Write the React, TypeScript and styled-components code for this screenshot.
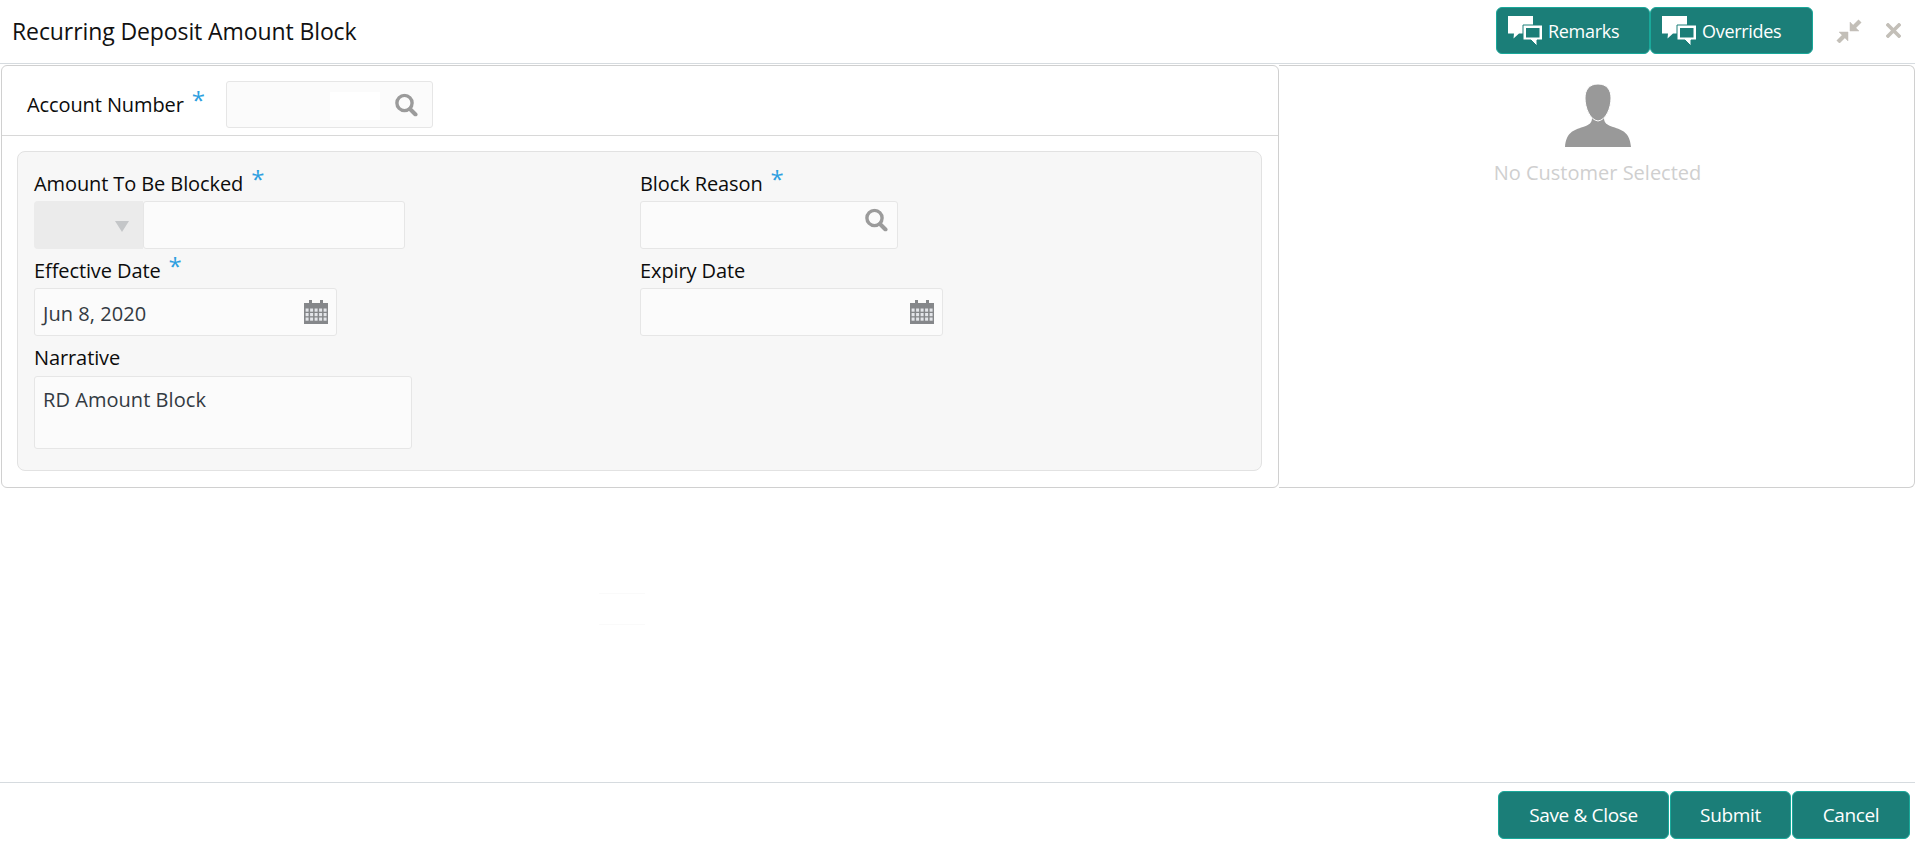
import React from "react";
import styled, { createGlobalStyle } from "styled-components";

const GlobalStyle = createGlobalStyle`
  html, body {
    margin: 0;
    padding: 0;
    background: #fff;
  }
  body {
    font-family: "Open Sans", "Noto Sans", "Liberation Sans", sans-serif;
    color: #0c0c0c;
  }
  * {
    box-sizing: border-box;
  }
`;

const Page = styled.div`
  width: 1915px;
  height: 843px;
  display: flex;
  flex-direction: column;
  overflow: hidden;
  position: relative;
`;

const Header = styled.header`
  height: 64px;
  flex: none;
  display: flex;
  align-items: flex-start;
  padding: 7px 14px 0 12px;
  border-bottom: 1px solid #d6dbdf;
`;

const Title = styled.h1`
  margin: 0;
  height: 47px;
  line-height: 49px;
  font-size: 23px;
  font-weight: 400;
  letter-spacing: -0.1px;
  color: #111;
`;

const HeaderActions = styled.div`
  margin-left: auto;
  display: flex;
  align-items: center;
`;

const ActionButton = styled.button<{ $width: number }>`
  width: ${(p) => p.$width}px;
  height: 47px;
  flex: none;
  display: flex;
  align-items: center;
  gap: 5px;
  padding: 0 0 0 11px;
  background: #1b7e78;
  border: 1px solid #19a89a;
  border-radius: 6px;
  color: #fff;
  font-family: inherit;
  font-size: 18px;
  letter-spacing: -0.3px;
`;

const WindowIcons = styled.div`
  display: flex;
  align-items: center;
  gap: 24px;
  margin-left: 23px;
`;

const Body = styled.main`
  flex: none;
  display: flex;
  padding: 1px 0 0 1px;
`;

const MainPanel = styled.section`
  width: 1278px;
  height: 423px;
  flex: none;
  display: flex;
  flex-direction: column;
  border: 1px solid #d0d0d0;
  border-radius: 6px;
`;

const AccountRow = styled.div`
  height: 70px;
  flex: none;
  display: flex;
  align-items: flex-start;
  padding: 15px 0 0 25px;
  border-bottom: 1px solid #d8d8d8;
`;

const AccountLabel = styled.label`
  display: block;
  width: 199px;
  line-height: 47px;
  font-size: 20px;
  letter-spacing: -0.1px;
  white-space: nowrap;
`;

const Star = styled.span`
  margin-left: 8px;
  color: #2e9fe0;
  font-size: 24px;
  line-height: 0;
  vertical-align: 3px;
`;

const FormSection = styled.div`
  margin: 15px 16px 16px 15px;
  flex: 1;
  display: grid;
  grid-template-columns: 606px 1fr;
  grid-auto-rows: min-content;
  row-gap: 10px;
  align-content: start;
  padding: 20px 0 0 16px;
  background: #f7f7f7;
  border: 1px solid #e2e2e2;
  border-radius: 8px;
`;

const Field = styled.div`
  display: flex;
  flex-direction: column;
  align-items: flex-start;
`;

const FieldLabel = styled.label<{ $gap?: number }>`
  display: block;
  height: 22px;
  margin-bottom: ${(p) => p.$gap ?? 7}px;
  line-height: 24px;
  font-size: 20px;
  letter-spacing: -0.1px;
  white-space: nowrap;
`;

const InputBox = styled.div<{ $width: number; $height?: number }>`
  position: relative;
  width: ${(p) => p.$width}px;
  height: ${(p) => p.$height ?? 48}px;
  flex: none;
  display: flex;
  align-items: center;
  padding: 2px 8px 0;
  background: #fbfbfb;
  border: 1px solid #e6e6e6;
  border-radius: 3px;
  font-size: 20px;
  letter-spacing: 0.05px;
  color: #333a42;
`;

const TextArea = styled(InputBox)`
  align-items: flex-start;
  padding-top: 11px;
  line-height: 24px;
`;

const AmountGroup = styled.div`
  display: flex;
`;

const CurrencySelect = styled.div`
  width: 109px;
  height: 48px;
  flex: none;
  display: flex;
  align-items: center;
  justify-content: flex-end;
  padding-right: 14px;
  background: #ebebeb;
  border-radius: 4px 0 0 4px;
`;

const Caret = styled.span`
  width: 0;
  height: 0;
  border-left: 7.5px solid transparent;
  border-right: 7.5px solid transparent;
  border-top: 11px solid #c4c6c8;
  margin-top: 2px;
`;

const WhitePatch = styled.span`
  position: absolute;
  left: 103px;
  top: 10px;
  width: 50px;
  height: 28px;
  background: #fff;
`;

const IconSlot = styled.span<{ $right: number; $up?: number }>`
  position: absolute;
  right: ${(p) => p.$right}px;
  top: calc(50% - ${(p) => p.$up ?? 0}px);
  transform: translateY(-50%);
  display: flex;
`;

const CustomerPanel = styled.aside`
  width: 636px;
  height: 423px;
  flex: none;
  display: flex;
  flex-direction: column;
  align-items: center;
  padding: 18px 0 0 2px;
  border: 1px solid #d0d0d0;
  border-left: none;
  border-radius: 0 6px 6px 0;
`;

const NoCustomer = styled.div`
  margin-top: 12px;
  font-size: 20px;
  line-height: 28px;
  color: #cfcfcf;
`;

const GhostLines = styled.div`
  position: absolute;
  left: 599px;
  top: 593px;
  width: 46px;
  height: 32px;
  border-top: 1px solid #fafafa;
  border-bottom: 1px solid #fafafa;
`;

const Footer = styled.footer`
  margin-top: auto;
  height: 61px;
  flex: none;
  display: flex;
  justify-content: flex-end;
  padding: 8px 5px 0 0;
  border-top: 1px solid #d6dbdf;
`;

const FooterButton = styled.button<{ $width: number }>`
  width: ${(p) => p.$width}px;
  height: 48px;
  margin-left: 1px;
  background: #1b7e78;
  border: 1px solid #19a89a;
  border-radius: 6px;
  color: #fff;
  font-family: inherit;
  font-size: 19px;
  letter-spacing: -0.35px;
`;

const SearchIcon = () => (
  <svg width="23" height="23" viewBox="0 0 23 23">
    <circle cx="9.5" cy="9.500" r="7.600" fill="none" stroke="#9b9b9b" strokeWidth="3.400" />
    <path d="M15 15.500 L20.500 21" stroke="#9b9b9b" strokeWidth="4" strokeLinecap="round" />
  </svg>
);

const CalendarIcon = () => (
  <svg width="24" height="24" viewBox="0 0 24 24">
    <path d="M0 3h5V0h3v3h8V0h3v3h5v21H0z" fill="#85878a" />
    <g fill="#e3e5e9">
      {[8.5, 13, 17.5].flatMap((y) =>
        [1.6, 6.1, 10.6, 15.1, 19.6].map((x) => (
          <rect key={`${x}-${y}`} x={x} y={y} width="3" height="3.200" />
        ))
      )}
    </g>
  </svg>
);

const BubblesIcon = () => (
  <svg width="35" height="30" viewBox="0 0 35 30">
    <path d="M0 0h25v9H15v8.500H11L5.500 22.500 6 17.500H0z" fill="#fff" />
    <path
      d="M15 9h19.500v15h-5.500v6L23 24h-8z"
      fill="#fff"
      stroke="#1b7e78"
      strokeWidth="1"
    />
    <rect x="18" y="12" width="13.500" height="9.500" fill="#1b7e78" />
  </svg>
);

const CompressIcon = () => (
  <svg width="26" height="24" viewBox="0 0 26 24">
    <g fill="#c3bfb8" stroke="#c3bfb8">
      <path d="M14 3V12H23Z" strokeWidth="0.500" />
      <path d="M17 9L24 2" strokeWidth="4.200" />
      <path d="M12 22V13H3Z" strokeWidth="0.500" />
      <path d="M9 16L2 23" strokeWidth="4.200" />
    </g>
  </svg>
);

const CloseIcon = () => (
  <svg width="15" height="15" viewBox="0 0 15 15">
    <path d="M2 2l11 11M13 2L2 13" stroke="#c3bfb8" strokeWidth="3.600" strokeLinecap="square" />
  </svg>
);

const PersonIcon = () => (
  <svg width="66" height="63" viewBox="0 0 66 63">
    <path
      d="M27 34C27 39 24 41 18 43C8 46 1 49 0 63H66C65 49 58 46 48 43C42 41 39 39 39 34Z"
      fill="#999"
    />
    <path
      d="M33 0C42 0 46 6 46 14C46 24 41 36 33 37C25 36 20 24 20 14C20 6 24 0 33 0Z"
      fill="#999"
      stroke="#fff"
      strokeWidth="1"
    />
  </svg>
);

export default function App() {
  return (
    <Page>
      <GlobalStyle />
      <Header>
        <Title>Recurring Deposit Amount Block</Title>
        <HeaderActions>
          <ActionButton $width={154} type="button">
            <BubblesIcon />
            Remarks
          </ActionButton>
          <ActionButton $width={163} type="button">
            <BubblesIcon />
            Overrides
          </ActionButton>
          <WindowIcons>
            <CompressIcon />
            <CloseIcon />
          </WindowIcons>
        </HeaderActions>
      </Header>

      <Body>
        <MainPanel>
          <AccountRow>
            <AccountLabel>
              Account Number<Star>*</Star>
            </AccountLabel>
            <InputBox $width={207} $height={47}>
              <WhitePatch />
              <IconSlot $right={14}>
                <SearchIcon />
              </IconSlot>
            </InputBox>
          </AccountRow>

          <FormSection>
            <Field>
              <FieldLabel>
                Amount To Be Blocked<Star>*</Star>
              </FieldLabel>
              <AmountGroup>
                <CurrencySelect>
                  <Caret />
                </CurrencySelect>
                <InputBox $width={262} />
              </AmountGroup>
            </Field>
            <Field>
              <FieldLabel>
                Block Reason<Star>*</Star>
              </FieldLabel>
              <InputBox $width={258}>
                <IconSlot $right={9} $up={5}>
                  <SearchIcon />
                </IconSlot>
              </InputBox>
            </Field>
            <Field>
              <FieldLabel>
                Effective Date<Star>*</Star>
              </FieldLabel>
              <InputBox $width={303}>
                Jun 8, 2020
                <IconSlot $right={8}>
                  <CalendarIcon />
                </IconSlot>
              </InputBox>
            </Field>
            <Field>
              <FieldLabel>Expiry Date</FieldLabel>
              <InputBox $width={303}>
                <IconSlot $right={8}>
                  <CalendarIcon />
                </IconSlot>
              </InputBox>
            </Field>
            <Field>
              <FieldLabel $gap={8}>Narrative</FieldLabel>
              <TextArea $width={378} $height={73}>
                RD Amount Block
              </TextArea>
            </Field>
          </FormSection>
        </MainPanel>

        <CustomerPanel>
          <PersonIcon />
          <NoCustomer>No Customer Selected</NoCustomer>
        </CustomerPanel>
      </Body>

      <GhostLines />

      <Footer>
        <FooterButton $width={171} type="button">
          Save &amp; Close
        </FooterButton>
        <FooterButton $width={121} type="button">
          Submit
        </FooterButton>
        <FooterButton $width={118} type="button">
          Cancel
        </FooterButton>
      </Footer>
    </Page>
  );
}
